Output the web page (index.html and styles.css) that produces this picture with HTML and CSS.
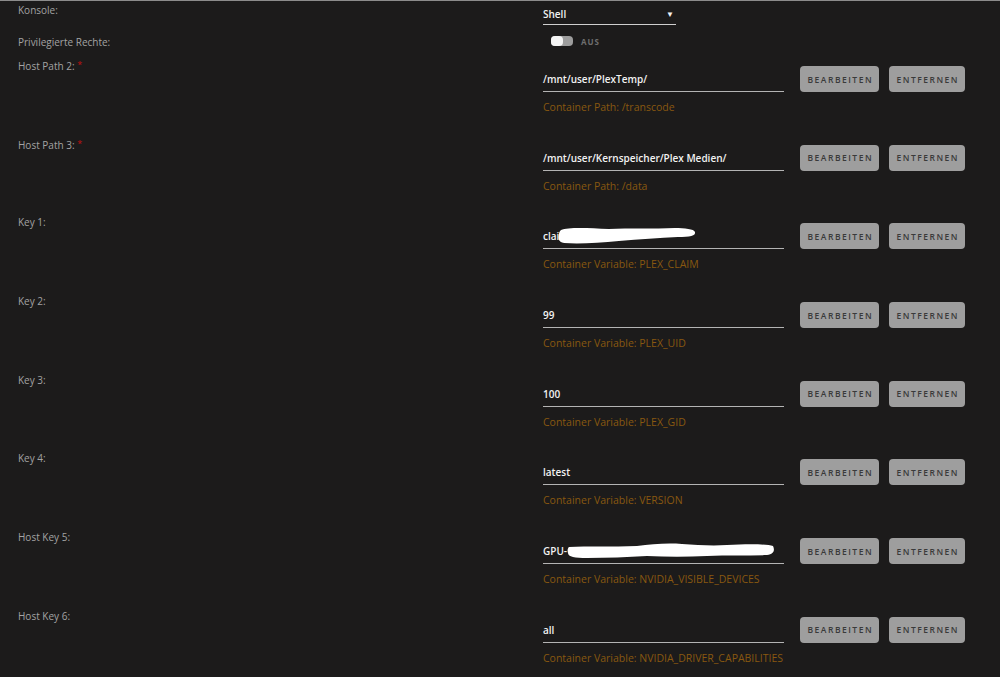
FILE: index.html
```html
<!DOCTYPE html>
<html lang="de">
<head>
<meta charset="utf-8">
<title>Container bearbeiten</title>
<link rel="stylesheet" href="styles.css">
</head>
<body>
<div class="panel">
  <div class="row row-console">
    <div class="label">Konsole:</div>
    <div class="value">
      <div class="select"><span>Shell</span><span class="caret">&#9660;</span></div>
    </div>
  </div>
  <div class="row row-priv">
    <div class="label">Privilegierte Rechte:</div>
    <div class="value">
      <div class="toggle"><span class="knob"></span></div>
      <span class="toggle-text">AUS</span>
    </div>
  </div>

  <div class="row cfg">
    <div class="label">Host Path 2: <span class="req">*</span></div>
    <div class="value">
      <div class="line">
        <div class="field">/mnt/user/PlexTemp/</div>
        <button class="btn">Bearbeiten</button>
        <button class="btn">Entfernen</button>
      </div>
      <div class="hint">Container Path: /transcode</div>
    </div>
  </div>

  <div class="row cfg">
    <div class="label">Host Path 3: <span class="req">*</span></div>
    <div class="value">
      <div class="line">
        <div class="field">/mnt/user/Kernspeicher/Plex Medien/</div>
        <button class="btn">Bearbeiten</button>
        <button class="btn">Entfernen</button>
      </div>
      <div class="hint">Container Path: /data</div>
    </div>
  </div>

  <div class="row cfg">
    <div class="label">Key 1:</div>
    <div class="value">
      <div class="line">
        <div class="field">clai<svg class="blot blot-claim" width="138" height="17" viewBox="0 0 136 17" preserveAspectRatio="none"><path d="M3 3 C10 0 30 1 50 2 C70 1 95 2 115 1 C125 1 134 2 135 5 C136 9 130 10 118 10 C100 11 80 12 60 14 C40 16 20 17 6 16 C0 15 0 11 1 7 C1 5 2 4 3 3 Z" fill="#fff"/></svg></div>
        <button class="btn">Bearbeiten</button>
        <button class="btn">Entfernen</button>
      </div>
      <div class="hint">Container Variable: PLEX_CLAIM</div>
    </div>
  </div>

  <div class="row cfg">
    <div class="label">Key 2:</div>
    <div class="value">
      <div class="line">
        <div class="field">99</div>
        <button class="btn">Bearbeiten</button>
        <button class="btn">Entfernen</button>
      </div>
      <div class="hint">Container Variable: PLEX_UID</div>
    </div>
  </div>

  <div class="row cfg">
    <div class="label">Key 3:</div>
    <div class="value">
      <div class="line">
        <div class="field">100</div>
        <button class="btn">Bearbeiten</button>
        <button class="btn">Entfernen</button>
      </div>
      <div class="hint">Container Variable: PLEX_GID</div>
    </div>
  </div>

  <div class="row cfg">
    <div class="label">Key 4:</div>
    <div class="value">
      <div class="line">
        <div class="field">latest</div>
        <button class="btn">Bearbeiten</button>
        <button class="btn">Entfernen</button>
      </div>
      <div class="hint">Container Variable: VERSION</div>
    </div>
  </div>

  <div class="row cfg">
    <div class="label">Host Key 5:</div>
    <div class="value">
      <div class="line">
        <div class="field">GPU-<svg class="blot blot-gpu" width="208" height="16" viewBox="0 0 208 16"><path d="M2 4 C20 3 45 4 70 3 C85 1 100 0 115 1 C130 2 145 3 160 2 C180 1 200 1 206 3 C208 7 207 11 200 12 C180 13 160 12 140 13 C120 14 100 14 80 13 C60 14 40 15 20 15 C8 15 1 14 1 10 C0 7 1 5 2 4 Z" fill="#fff"/></svg></div>
        <button class="btn">Bearbeiten</button>
        <button class="btn">Entfernen</button>
      </div>
      <div class="hint">Container Variable: NVIDIA_VISIBLE_DEVICES</div>
    </div>
  </div>

  <div class="row cfg">
    <div class="label">Host Key 6:</div>
    <div class="value">
      <div class="line">
        <div class="field">all</div>
        <button class="btn">Bearbeiten</button>
        <button class="btn">Entfernen</button>
      </div>
      <div class="hint">Container Variable: NVIDIA_DRIVER_CAPABILITIES</div>
    </div>
  </div>
</div>
</body>
</html>
```

FILE: styles.css
```css
html, body {
  margin: 0;
  padding: 0;
  background: #1c1b1b;
  height: 100%;
  overflow: hidden;
}

body {
  font-family: "Open Sans", "Noto Sans", sans-serif;
  font-size: 10px;
  color: #a3a3a3;
}

.panel {
  border-top: 1px solid #8c8c8c;
  padding-top: 2px;
}

.row {
  display: flex;
  align-items: flex-start;
}

.label {
  width: 525px;
  padding-left: 18px;
  line-height: 14px;
  flex: none;
}

.req {
  color: #c01010;
  font-size: 9px;
  vertical-align: 2px;
}

.value {
  flex: none;
}

/* Konsole select */
.row-console {
  height: 32px;
}

.select {
  margin-top: 3px;
  width: 133px;
  padding: 1px 0 3px;
  line-height: 14px;
  border-bottom: 1px solid #cfcfcf;
  color: #f2f2f2;
  font-weight: 600;
  display: flex;
  justify-content: space-between;
}

.caret {
  font-size: 8px;
  padding-right: 2px;
}

/* privilege switch */
.row-priv {
  height: 23px;
}

.row-priv .value {
  display: flex;
  align-items: center;
  height: 12px;
}

.toggle {
  margin-left: 8px;
  width: 22px;
  height: 10px;
  border-radius: 4px;
  background: #9d9d9d;
  position: relative;
}

.knob {
  position: absolute;
  left: 0;
  top: 0;
  width: 12px;
  height: 10px;
  border-radius: 4px;
  background: #f4f4f4;
}

.toggle-text {
  margin-left: 8px;
  font-size: 8px;
  font-weight: 700;
  letter-spacing: 1px;
  color: #6f6f6f;
}

/* template config entries */
.cfg {
  height: 78.7px;
}

.line {
  display: flex;
  align-items: flex-start;
  margin-top: 8px;
}

.field {
  margin-top: 4px;
  width: 241px;
  height: 18px;
  padding-bottom: 3px;
  line-height: 18px;
  border-bottom: 1px solid #b4b4b4;
  color: #f2f2f2;
  font-weight: 600;
  font-size: 10px;
  white-space: nowrap;
  display: flex;
  align-items: center;
}

.blot {
  display: block;
  flex: none;
}

.blot-claim {
  margin-top: -1px;
  margin-left: -1px;
}

.btn {
  margin-left: 16px;
  height: 26px;
  padding: 0 6px 0 7.5px;
  border: none;
  border-radius: 4px;
  background: #9e9e9e;
  color: #3a3a3a;
  font-family: "Open Sans", "Noto Sans", sans-serif;
  font-size: 8.5px;
  font-weight: 600;
  letter-spacing: 1.5px;
  text-transform: uppercase;
}

.btn + .btn {
  margin-left: 10px;
}

.hint {
  margin-top: 8px;
  line-height: 14px;
  font-size: 10.5px;
  color: #885810;
}
```
